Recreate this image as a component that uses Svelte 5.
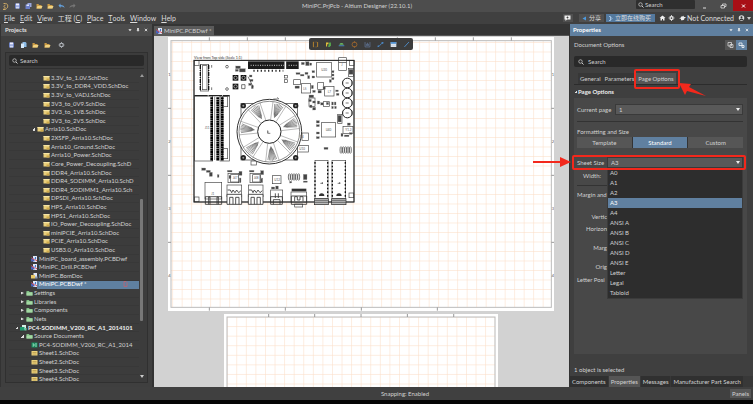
<script>
  const menus = ['File', 'Edit', 'View', '工程 (C)', 'Place', 'Tools', 'Window', 'Help'];

  const deep = (name) => ({ name, level: 4, icon: 'sch' });
  const tree = [
    ...['3.3V_to_1.0V.SchDoc', '3.3V_to_DDR4_VDD.SchDoc', '3.3V_to_VADJ.SchDoc', '3V3_to_0V9.SchDoc', '3V3_to_1V8.SchDoc', '3V3_to_2V5.SchDoc'].map(deep),
    { name: 'Arria10.SchDoc', level: 3, icon: 'sch', arrow: 'open' },
    ...['2XSFP_Arria10.SchDoc', 'Arria10_Ground.SchDoc', 'Arria10_Power.SchDoc', 'Core_Power_Decoupling.SchD', 'DDR4_Arria10.SchDoc', 'DDR4_SODIMM_Arria10.SchD', 'DDR4_SODIMM1_Arria10.Sch', 'DPSDI_Arria10.SchDoc', 'HPS_Arria10.SchDoc', 'HPS1_Arria10.SchDoc', 'IO_Power_Decoupling.SchDoc', 'miniPCIE_Arria10.SchDoc', 'PCIE_Arria10.SchDoc', 'USB3.0_Arria10.SchDoc'].map(deep),
    { name: 'MiniPC_board_assembly.PCBDwf', level: 2, icon: 'dwf' },
    { name: 'MiniPC_Drill.PCBDwf', level: 2, icon: 'dwf' },
    { name: 'MiniPC.BomDoc', level: 2, icon: 'bom' },
    { name: 'MiniPC.PCBDwf *', level: 2, icon: 'dwf', active: true },
    { name: 'Settings', level: 1, icon: 'folder', arrow: 'shut' },
    { name: 'Libraries', level: 1, icon: 'folder', arrow: 'shut' },
    { name: 'Components', level: 1, icon: 'folder', arrow: 'shut' },
    { name: 'Nets', level: 1, icon: 'folder', arrow: 'shut' },
    { name: 'PC4-SODIMM_V200_RC_A1_2014101', level: 0, icon: 'proj', arrow: 'open', bold: true },
    { name: 'Source Documents', level: 1, icon: 'folder', arrow: 'open' },
    { name: 'PC4-SODIMM_V200_RC_A1_2014', level: 2, icon: 'pcb' },
    ...['Sheet1.SchDoc', 'Sheet2.SchDoc', 'Sheet3.SchDoc', 'Sheet4.SchDoc'].map((name) => ({ name, level: 2, icon: 'sheet' }))
  ];

  const sizes = ['A0', 'A1', 'A2', 'A3', 'A4', 'ANSI A', 'ANSI B', 'ANSI C', 'ANSI D', 'ANSI E', 'Letter', 'Legal', 'Tabloid'];
  let size = $state('A3');
  let section = $state('Page Options');
  let format = $state('Standard');

  const polar = (r, deg) => [328 + r * Math.cos((deg * Math.PI) / 180), 305 + r * Math.sin((deg * Math.PI) / 180)].map((v) => v.toFixed(1)).join(' ');
  const angles = [33, 84, 136, 187, 239, 290, 341];
  const hatch = angles.map((a) => [-3, -2, -1, 0, 1, 2, 3].map((k) => `M${polar(44 + Math.abs(k) * 3, a + k * 1.5)}L${polar(88 - Math.abs(k), a + k * 3)}`).join('')).join('');
  const blades = angles.map((a) => `M${polar(36, a - 14)}L${polar(91, a - 13)}M${polar(36, a + 14)}L${polar(91, a + 13)}`).join('');

  const seq = (n) => Array.from({ length: n }, (_, i) => i);
  // small parts: x, y, width, height
  const solid = [
    [227, 108, 14, 8], [238, 116, 18, 10], [226, 118, 9, 6], [268, 135, 8, 6], [270, 148, 9, 6], [266, 160, 8, 6], [274, 166, 6, 10],
    [424, 97, 9, 7], [437, 95, 10, 12], [449, 99, 6, 7], [408, 128, 12, 5], [421, 133, 11, 5], [435, 127, 9, 6], [443, 137, 6, 9],
    [456, 122, 8, 6], [456, 138, 8, 6], [515, 122, 7, 6], [515, 132, 7, 6], [515, 143, 7, 6], [508, 149, 6, 8], [405, 168, 13, 7],
    [454, 166, 6, 10], [458, 181, 8, 6], [474, 181, 10, 8], [489, 170, 7, 8], [527, 180, 8, 5], [529, 190, 8, 6], [447, 195, 14, 8],
    [446, 208, 8, 7], [458, 213, 8, 6], [449, 225, 7, 8], [458, 232, 9, 8], [472, 213, 7, 9], [482, 218, 8, 7], [499, 217, 7, 7],
    [515, 216, 5, 9], [523, 216, 5, 9], [515, 229, 5, 7], [524, 229, 5, 7], [469, 272, 9, 7], [469, 284, 9, 6], [469, 306, 9, 6], [469, 320, 9, 6],
    [534, 256, 10, 20], [562, 279, 9, 7], [543, 310, 6, 9], [553, 315, 14, 5], [568, 308, 8, 5], [492, 352, 12, 6], [567, 118, 12, 15],
    [125, 414, 12, 7], [139, 421, 12, 6], [148, 427, 9, 12], [172, 434, 5, 8], [207, 436, 6, 10], [237, 424, 9, 12], [302, 422, 9, 12],
    [202, 421, 14, 5], [268, 421, 14, 5], [334, 471, 10, 6], [347, 468, 8, 9], [430, 433, 11, 16], [430, 453, 12, 4], [389, 454, 6, 5], [238, 444, 5, 14], [303, 444, 5, 14]
  ];
  const outline = [
    [102, 91, 480, 425], [103, 92, 14, 14], [103, 501, 14, 14], [567, 489, 14, 14], [568, 92, 14, 14], [121, 103, 25, 80], [127, 107, 14, 72],
    [104, 198, 54, 195], [180, 198, 28, 195], [187, 200, 16, 30], [187, 356, 16, 30], [470, 97, 44, 44], [536, 83, 23, 14], [536, 97, 23, 24],
    [424, 161, 28, 28], [401, 149, 20, 15], [473, 158, 18, 20], [494, 169, 28, 29], [447, 204, 18, 25], [484, 278, 43, 43], [549, 289, 30, 21],
    [565, 115, 15, 24], [426, 309, 19, 22], [413, 346, 32, 20], [135, 457, 50, 50], [204, 430, 32, 28], [212, 434, 24, 22], [270, 430, 32, 28], [278, 434, 22, 22],
    [201, 465, 44, 35], [265, 465, 44, 35], [337, 437, 26, 24], [332, 480, 36, 36], [393, 486, 47, 30], [404, 522, 24, 9],
    [465, 391, 39, 116], [516, 391, 41, 116], [273, 393, 16, 12], [373, 136, 9, 8], [373, 149, 9, 8], [490, 215, 18, 14], [533, 253, 13, 27]
  ];
  const bolts = [[250, 227], [407, 227], [250, 383], [407, 383]];
</script>

{#snippet glass()}
  <svg class="i6" viewBox="0 0 12 12" aria-hidden="true"><circle cx="5" cy="5" r="3.5" fill="none" stroke="#ccc" stroke-width="1.5" /><path d="M8 8l3 3" stroke="#ccc" stroke-width="2" /></svg>
{/snippet}

{#snippet icon(kind)}
  <svg class="i7" viewBox="0 0 14 12" aria-hidden="true">
    {#if kind === 'sch'}
      <path d="M1 2h12v9H1z" fill="#e9cf7c" /><path d="M1 2h12v2H1z" fill="#f6e5a6" /><path d="M7 7h6v4H7z" fill="#cfa94a" />
    {:else if kind === 'sheet'}
      <path d="M1 2h12v9H1z" fill="#ecd27c" /><path d="M3 5h8M3 8h8" stroke="#9b7b32" />
    {:else if kind === 'folder'}
      <path d="M1 2h5l1 2h6v7H1z" fill="#7fbf84" /><path d="M1 5h12v6H1z" fill="#a3d7a2" />
    {:else if kind === 'dwf'}
      <path d="M4 0h8v12H4z" fill="#dfe6f5" /><path d="M0 5h7v6H0z" fill="#4b62b8" /><path d="M1 3l5 5M8 7l4 3" stroke="#d9474e" stroke-width="2" /><path d="M9 2v4" stroke="#3e76d0" stroke-width="2" />
    {:else if kind === 'bom'}
      <path d="M5 0h7v9H5z" fill="#dfe6f5" /><path d="M0 4h8v7H0z" fill="#e7c868" /><path d="M8 7h5v4H8z" fill="#8e9fbd" />
    {:else if kind === 'proj'}
      <path d="M4 0h8v9H4z" fill="#d6efe5" /><path d="M0 4h9v7H0z" fill="#1f9a6d" /><path d="M9 6h4v5H9z" fill="#6ccba6" />
    {:else if kind === 'save'}
      <path d="M2 1h10v10H2z" fill="#7285c6" /><path d="M4 1h6v4H4z" fill="#eef" /><path d="M4 7h6v4H4z" fill="#cfd8f2" />
    {:else if kind === 'saveall'}
      <path d="M5 0h8v8H5z" fill="#9aa7dc" /><path d="M1 3h9v9H1z" fill="#6c7fc8" /><path d="M3 3h5v3H3z" fill="#dde3fa" />
    {:else if kind === 'docs'}
      <path d="M5 0h6l2 2v8H5z" fill="#8dbce6" /><path d="M2 3h6v9H2z" fill="#d6e9fa" />
    {:else if kind === 'open'}
      <path d="M1 2h4l1 2h5v7H1z" fill="#c99a45" /><path d="M3 6h10l-2 5H1z" fill="#f1d382" />
    {:else if kind === 'undo'}
      <path d="M1 5l4-4v3c5 0 8 2 8 6-2-3-4-3-8-3v3z" fill="#64a2df" />
    {:else if kind === 'redo'}
      <path d="M13 5L9 1v3c-5 0-8 2-8 6 2-3 4-3 8-3v3z" fill="#777" />
    {:else if kind === 'gear'}
      <circle cx="7" cy="6" r="3.5" fill="none" stroke="#b7bcc2" stroke-width="2.2" /><path d="M7 0v2M7 10v2M1 6h2M11 6h2M3 2l1 1M10 9l1 1M11 2l-1 1M3 10l1-1" stroke="#b7bcc2" stroke-width="1.5" />
    {:else}
      <path d="M1 1h12v10H1z" fill="#148a5b" /><path d="M3 4h3v4H3M8 4h4M8 8h4" fill="none" stroke="#bff0d8" stroke-width="1.5" />
    {/if}
  </svg>
{/snippet}

{#snippet pins()}
  <span class="pins">
    <svg viewBox="0 0 10 10"><path d="M1 3h8L5 8z" fill="#eee" /></svg>
    <svg viewBox="0 0 10 10"><path d="M3 0h4v5h1v2H2V5h1zM4.500 7h1v3h-1z" fill="#eee" /></svg>
    <svg viewBox="0 0 10 10"><path d="M2 2l6 6M8 2l-6 6" stroke="#eee" stroke-width="2" /></svg>
  </span>
{/snippet}

<div class="app">
  <header class="title">
    <div class="quick">
      <svg class="logo" viewBox="0 0 14 18" aria-hidden="true"><path d="M3 3h4c6 0 6 10 0 11H3M7 6c-4 0-4 6 0 5M2 15h5" fill="none" stroke="#c9a765" stroke-width="2" /></svg>
      {#each ['save', 'saveall', 'open', 'open', 'undo', 'redo'] as k}<button aria-label={k}>{@render icon(k)}</button>{/each}
    </div>
    <h1>MiniPC.PrjPcb - Altium Designer (22.10.1)</h1>
    <label class="find">{@render glass()}<input aria-label="Search" placeholder="Search" /></label>
    <div class="win">
      <button aria-label="Minimize"><svg class="i7" viewBox="0 0 14 12"><path d="M4 10h6" stroke="#ddd" stroke-width="2" /></svg></button>
      <button aria-label="Restore"><svg class="i7" viewBox="0 0 14 12"><path d="M2 5h7v5H2zM5 5V2h7v5H9" fill="none" stroke="#ddd" stroke-width="1.6" /></svg></button>
      <button class="close" aria-label="Close"><svg class="i7" viewBox="0 0 14 12"><path d="M4 3l6 6M10 3l-6 6" stroke="#fff" stroke-width="2" /></svg></button>
    </div>
  </header>

  <nav class="menu">
    {#each menus as m}<button>{#if m.includes('(')}{m.slice(0, -2)}<u>C</u>){:else}<u>{m[0]}</u>{m.slice(1)}{/if}</button>{/each}
    <div class="account">
      <button class="note" aria-label="Comments"><svg class="i7" viewBox="0 0 14 12"><path d="M1 1h12v8H6l-3 3V9H1z" fill="#eee" /><path d="M7 3v4M5 5h4" stroke="#333" stroke-width="1.5" /></svg></button>
      <button class="share"><svg class="i5" viewBox="0 0 10 10"><path d="M1 5l7-4v8z" fill="#4d9ae0" /></svg>分享</button>
      <button class="buy"><svg class="i5" viewBox="0 0 10 10"><path d="M2 1h3v8H2M5 2l3 3-3 3" fill="none" stroke="#b9d8f5" stroke-width="1.5" /></svg>立即在线购买</button>
      <svg class="i7" viewBox="0 0 14 12"><path d="M7 1l6 5h-2v5H8V8H6v3H3V6H1z" fill="#eee" /></svg>
      <svg class="i7" viewBox="0 0 14 12"><circle cx="7" cy="6" r="3" fill="none" stroke="#eee" stroke-width="2.500" /><path d="M7 0v2M7 10v2M1 6h2M11 6h2M3 2l1 1M10 9l1 1M11 2l-1 1M3 10l1-1" stroke="#eee" stroke-width="1.500" /></svg>
      <span class="link"><svg class="i7" viewBox="0 0 14 12"><path d="M1 7h2c0-4 3-5 5-4l1-2 1 3h3v2h-2c0 4-3 5-5 4l-2 1 0-3H1z" fill="#eee" /></svg>Not Connected</span>
      <svg class="i7" viewBox="0 0 14 12"><circle cx="7" cy="6" r="5.500" fill="#ddd" /><circle cx="7" cy="4.500" r="2" fill="#333" /><path d="M3 10c1-4 7-4 8 0" fill="#333" /></svg>
      <i class="caret"></i>
    </div>
  </nav>

  <main>
    <aside class="projects">
      <h2 class="bar">Projects {@render pins()}</h2>
      <div class="tools">
        {#each ['save', 'docs', 'open', 'open'] as k}<button aria-label={k}>{@render icon(k)}</button>{/each}
        <button class="set" aria-label="Settings">{@render icon('gear')}</button>
      </div>
      <div class="box">
        <label class="search">{@render glass()}<input aria-label="Search projects" placeholder="Search" /></label>
        <div class="scroll">
          <ul class="tree">
            {#each tree as t}
              <li class="l{t.level}" class:active={t.active} class:bold={t.bold}>
                <i class="tri {t.arrow ?? ''}"></i>{@render icon(t.icon)}<span>{t.name}</span>
                {#if t.active}<svg class="mark" viewBox="0 0 10 12"><path d="M2 1h4l2 2v8H2z" fill="none" stroke="#c7606e" stroke-width="1.500" /></svg>{/if}
              </li>
            {/each}
          </ul>
          <div class="track"><i class="caret up"></i><b></b><i class="caret"></i></div>
        </div>
      </div>
    </aside>

    <section class="editor">
      <div class="tabs"><button class="doc">{@render icon('dwf')}MiniPC.PCBDwf *</button></div>
      <div class="canvas">
        <svg class="sheet" viewBox="24 21 1158 822">
          <defs><pattern id="grid" x="8" y="36" width="28.500" height="28.500" patternUnits="userSpaceOnUse"><path d="M1 0v28.500M0 1h28.500" stroke="#fcdfca" stroke-width="2" fill="none" /></pattern></defs>
          <rect x="24" y="21" width="1158" height="822" fill="#fff" />
          <rect x="33" y="32" width="1141" height="800" fill="url(#grid)" stroke="#bbb" stroke-width="3" />
          <path d="M148 22v10M262 22v10M376 22v10M712 22v10M826 22v10M940 22v10M1054 22v10M24 235h9M24 436h9M24 637h9M1174 235h8M1174 436h8M1174 637h8M148 832v10M376 832v10M604 832v10M832 832v10" stroke="#999" stroke-width="3" />
          <g class="ref">{#each [1, 2, 3, 4] as n}<text x="25" y={n * 201 - 62}>{n}</text><text x="1175" y={n * 201 - 62}>{n}</text>{/each}</g>
          <text class="view" x="102" y="88">View from Top side (Scale 1:1)</text>
          <rect x="102" y="91" width="480" height="425" fill="#fff" />
          <g fill="#fff" stroke="#444" stroke-width="2">{#each outline as [x, y, width, height]}<rect {x} {y} {width} {height} />{/each}</g>
          <rect x="102" y="91" width="480" height="425" fill="none" stroke="#222" stroke-width="3" />
          <path d="M103 197h106" stroke="#222" stroke-width="4" stroke-dasharray="40 3" />
          <path d="M155 202v190M173 202v190M187 202v190" stroke="#000" stroke-width="8" stroke-dasharray="6 1" />
          <path d="M164 200v190M180 200v190" stroke="#555" stroke-width="2" />
          <path d="M121 105v76M146 105v76" stroke="#111" stroke-width="4" stroke-dasharray="12 3 3 3" />
          <rect x="264" y="94" width="152" height="23" fill="#1c1c1c" />
          <path d="M272 106h100M386 106h26" stroke="#aaa" stroke-width="4" stroke-dasharray="3 4" />
          <path d="M376 94v23" stroke="#fff" stroke-width="5" />
          <path d="M280 122h90" stroke="#333" stroke-width="6" stroke-dasharray="4 7" />
          <g fill="#444" stroke="#999" stroke-width="1">{#each solid as [x, y, width, height]}<rect {x} {y} {width} {height} />{/each}</g>
          {#each [[218, 135], [242, 135], [218, 161]] as [x, y]}<rect {x} {y} width="17" height="17" fill="#111" /><circle cx={x + 8.5} cy={y + 8.5} r="5" fill="#111" stroke="#ddd" stroke-width="2" />{/each}
          <g fill="none" stroke="#333" stroke-width="2"><circle cx="201" cy="110" r="4" /><circle cx="201" cy="177" r="4" /><path d="M245 164h10v12h-10zM155 105v8M155 172v8M264 140l15 30" /></g>
          {#each seq(4) as n}<circle cx="562" cy={159 + n * 30} r="14.500" fill="#fff" stroke="#222" stroke-width="3" /><path d="M548 {154 + n * 30}v10M576 {152 + n * 30}v14M557 {159 + n * 30}h9" stroke="#333" stroke-width="2" />{/each}
          <rect x="243" y="220" width="170" height="170" fill="#fff" stroke="#333" stroke-width="2" />
          {#each bolts as [cx, cy]}<circle {cx} {cy} r="8" fill="#222" /><circle {cx} {cy} r="3" fill="#999" />{/each}
          <circle cx="328" cy="305" r="97" fill="#fff" stroke="#333" stroke-width="3" />
          <circle cx="328" cy="305" r="91" fill="none" stroke="#555" stroke-width="2" />
          <path d={hatch} stroke="#333" stroke-width="1.500" />
          <path d={blades} fill="none" stroke="#777" stroke-width="1.500" />
          <circle cx="328" cy="305" r="35" fill="#fff" stroke="#222" stroke-width="3" />
          <path d="M323 301v9h8M340 207h16l-4-5M322 306h4" fill="none" stroke="#444" stroke-width="2" />
          {#each [388, 543] as x, k}{#each seq(5) as n}<ellipse cx={x + n * 7} cy={k ? 360 : 441} rx="3" ry="10" fill="none" stroke="#333" stroke-width="2" />{/each}{/each}
          {#each [201, 265] as x}
            <path d="M{x} 493h44v30h-44zM{x + 8} 523v-21h10v21M{x + 26} 523v-21h10v21M{x + 2} 480h8l4 8 4-8 6 8 5-8 6 8 7-6" fill="#fff" stroke="#333" stroke-width="2.500" />
          {/each}
          <path d="M136 500h49v23h-49zM146 523v-22h4v22M171 523v-22h4v22M332 500h35v23h-35zM340 523v-14h20v14M346 490v14M355 490v14M394 498h46v25h-46zM404 514v-14h8v10h8v-10h9v14" fill="none" stroke="#333" stroke-width="2.500" />
          <path d="M395 484h44v-8h-44z" fill="#333" />
          {#each [[463, 42], [515, 43]] as [x, w]}
            <rect {x} y="506" width={w} height="18" fill="#bbb" stroke="#222" stroke-width="2" />
            <path d="M{x} 511h{w}M{x} 517h{w}" stroke="#444" stroke-width="2" />
            <path d="M{x + 2} 396v106M{x + w - 2} 396v106" stroke="#111" stroke-width="4" stroke-dasharray="5 6" />
            <path d="M{x + 14} 498a8 8 0 0 1 16 0z" fill="#333" /><path d="M{x + 18} 460h8M{x + 24} 456v6" stroke="#444" stroke-width="2" />
          {/each}
          <g class="part"><text x="484" y="124">U20</text><text x="430" y="180">L5</text><text x="503" y="188">L7</text><text x="497" y="303">U40</text><text x="556" y="304">Y1.2</text><text x="420" y="324">C4</text><text x="418" y="360">U10</text><text x="218" y="448">J47</text><text x="281" y="448">J48</text><text x="343" y="453">U12</text><text x="154" y="494">J1</text><text x="134" y="298">J11</text><text x="544" y="108">J</text></g>
        </svg>
        <svg class="sheet second" viewBox="0 0 816 600">
          <rect width="816" height="600" fill="#fff" /><rect x="9" y="9" width="798" height="600" fill="url(#grid)" stroke="#bbb" stroke-width="3" />
          <path d="M133 0v9M270 0v9M408 0v9M546 0v9M684 0v9" stroke="#999" stroke-width="3" />
        </svg>
        <div class="float">
          <button aria-label="View"><svg viewBox="0 0 20 20"><path d="M4 3v14M16 3v14" stroke="#c48a2b" stroke-width="2.500" /><path d="M4 3h12M4 17h12" stroke="#c48a2b" stroke-width="1.500" stroke-dasharray="2" /></svg></button>
          <button aria-label="Layers"><svg viewBox="0 0 20 20"><path d="M3 16V4h7v5H6v7z" fill="#e4c33c" /><path d="M9 17l3-13h5v9l-4 4z" fill="#56a94d" /></svg></button>
          <button aria-label="Section"><svg viewBox="0 0 20 20"><path d="M4 11c0-7 12-7 12 0z" fill="#68b35e" /><path d="M2 12h16v3H2z" fill="#4b82b5" /></svg></button>
          <button aria-label="Detail"><svg viewBox="0 0 20 20"><circle cx="10" cy="10" r="7" fill="none" stroke="#b9712a" stroke-width="2" /><path d="M10 1v4M10 15v4" stroke="#b9712a" stroke-width="2" /></svg></button>
          <button aria-label="Dimension"><svg viewBox="0 0 20 20"><path d="M3 3v14h14V3M7 8v6M10 5v9M13 8v6" fill="none" stroke="#63799e" stroke-width="2" /></svg></button>
          <button aria-label="Callout"><svg viewBox="0 0 20 20"><path d="M2 16l5-2 5-6 6-3" fill="none" stroke="#4b83bd" stroke-width="2.500" /><path d="M13 3h5v5h-5zM2 13h4v4H2z" fill="#4b83bd" /></svg></button>
          <button aria-label="Table"><svg viewBox="0 0 20 20"><path d="M2 3h16v14H2z" fill="#e7edf5" /><path d="M2 3h16v5H2z" fill="#4d8fd0" /><path d="M2 12h16" stroke="#8395ab" /></svg></button>
          <button aria-label="Line"><svg viewBox="0 0 20 20"><path d="M4 17L17 3" stroke="#4f92d4" stroke-width="2.500" /></svg></button>
        </div>
      </div>
    </section>

    <aside class="props">
      <h2 class="bar blue">Properties {@render pins()}</h2>
      <div class="inner">
        <div class="scope">Document Options
          <span><button aria-label="Select"><svg class="i7" viewBox="0 0 14 12"><path d="M2 1h7v7H2zM6 5h6v6H6z" fill="none" stroke="#ddd" stroke-width="1.500" /></svg></button><button class="on" aria-label="Filter"><svg class="i7" viewBox="0 0 14 12"><path d="M2 2h6v5H2zM8 7h4v4H8z" fill="none" stroke="#fff" stroke-width="1.500" /></svg></button></span>
        </div>
        <label class="search">{@render glass()}<input aria-label="Search properties" placeholder="Search" /></label>
        <div class="sections">
          {#each ['General', 'Parameters', 'Page Options'] as s}<button class:on={section === s} onclick={() => (section = s)}>{s}</button>{/each}
          <div class="ring tabring"></div>
          <svg class="pointer short" viewBox="0 0 28 14"><path d="M0 0l12 1-2 3 17 9L8 8l-2 4z" fill="#f3281c" /></svg>
        </div>
        <h3><i class="tri open"></i>Page Options</h3>
        <div class="form">
          <div class="field"><label for="page">Current page</label><div class="pick"><select id="page"><option>1</option></select></div></div>
          <hr />
          <p>Formatting and Size</p>
          <div class="seg">{#each ['Template', 'Standard', 'Custom'] as f}<button class:on={format === f} onclick={() => (format = f)}>{f}</button>{/each}</div>
          <div class="field sheetsize">
            <label for="size">Sheet Size</label>
            <div class="pick"><select id="size" bind:value={size}>{#each sizes as s}<option>{s}</option>{/each}</select></div>
            <ul class="list" role="listbox" aria-label="Sheet Size">
              {#each sizes as s}<li role="option" aria-selected={size === s}>{s}</li>{/each}
            </ul>
            <div class="ring sizering"></div>
            <svg class="pointer long" viewBox="0 0 38 10"><path d="M0 4h27V0l11 5-11 5V6H0z" fill="#f3281c" /></svg>
          </div>
          <div class="covered">
            <span class="r">Width:</span>
            <hr />
            <span class="head">Margin and</span>
            <span class="r cut">Vertic</span>
            <span class="r cut">Horizon</span>
            <span class="r cut gap">Marg</span>
            <span class="r cut gap">Orig</span>
            <span class="cut">Letter Posi</span>
          </div>
        </div>
        <p class="count">1 object is selected</p>
      </div>
      <div class="foot">{#each ['Components', 'Properties', 'Messages', 'Manufacturer Part Search'] as f}<button class:on={f === 'Properties'}>{f}</button>{/each}</div>
    </aside>
  </main>

  <footer><span>Snapping: Enabled</span><button>Panels</button></footer>
</div>

<style>
  :global(body) { margin: 0; background: #050505; }
  .app { display: flex; flex-direction: column; height: 100vh; box-sizing: border-box; padding-bottom: 4px; background: #050505; color: #d2d2d2; font: 6px/8px Lato, 'Noto Sans CJK SC', sans-serif; overflow: hidden; }
  .app * { box-sizing: border-box; }
  button, input, select { font: inherit; color: inherit; border: 0; margin: 0; padding: 0; background: none; }
  button { display: flex; align-items: center; justify-content: center; white-space: nowrap; }
  input { min-width: 0; width: 100%; height: 8px; outline: 0; }
  input::placeholder { color: #cfcfcf; opacity: 1; }
  ul, p, h1, h2, h3 { margin: 0; padding: 0; list-style: none; font-size: inherit; }
  svg { flex: none; display: block; }
  .i5 { width: 5px; height: 5px; }
  .i6 { width: 6px; height: 6px; }
  .i7 { width: 7px; height: 6px; }
  .caret { border: 2px solid transparent; border-top: 3px solid #ccc; border-bottom: 0; width: 0; height: 0; }
  .caret.up { border-top: 0; border-bottom: 3px solid #999; }

  .title { display: flex; align-items: center; height: 12px; background: #4d4d4d; flex: none; }
  .quick { display: flex; align-items: center; gap: 4px; padding-left: 2px; width: 78px; }
  .logo { width: 7px; height: 9px; margin-right: 1px; }
  h1 { flex: 1; text-align: center; font-weight: 400; }
  .find { display: flex; align-items: center; gap: 1px; width: 59px; height: 9px; margin-bottom: 3px; padding-left: 2px; background: #2f2f2f; border-radius: 1px; }
  .win { display: flex; align-self: stretch; }
  .win button { width: 19px; height: 11px; }
  .win .close { width: 20px; background: #a80f16; }

  .menu { display: flex; align-items: center; height: 12px; padding: 0 2px 0 4px; gap: 5px; background: #404040; font-size: 7px; flex: none; color: #ddd; }
  .account { display: flex; align-items: center; margin-left: auto; gap: 2px; }
  .share, .buy { height: 8px; font-size: 6px; gap: 2px; padding: 0 3px; background: #505050; }
  .note { width: 10px; height: 8px; margin-right: 4px; background: #505050; }
  .buy { background: #54799e; margin-right: 2px; padding: 0 4px 0 2px; }
  .link { display: flex; align-items: center; gap: 1px; margin: 0 2px; }

  main { display: flex; flex: 1; min-height: 0; }
  .bar { display: flex; align-items: center; justify-content: space-between; height: 12px; padding: 0 4px; color: #e2e2e2; background: #4c4c4c; flex: none; }
  .bar.blue { background: #6080a0; padding: 0 4px 0 3px; color: #fff; }
  .pins { display: flex; gap: 4px; }
  .pins svg { width: 4px; height: 4px; }

  .projects { display: flex; flex-direction: column; width: 154px; flex: none; background: #3f3f3f; border-right: 2px solid #333; border-left: 1px solid #333; padding-bottom: 4px; }
  .tools { display: flex; align-items: center; gap: 5px; height: 16px; padding: 2px 0 0 7px; }
  .set { margin-left: 2px; }
  .box { display: flex; flex-direction: column; flex: 1; min-height: 0; margin: 0 4px; border: 1px solid #303030; background: #3c3c3c; }
  .search { display: flex; align-items: center; gap: 2px; height: 11px; padding: 0 3px; background: #292929; border-radius: 2px; flex: none; }
  .box .search { margin: 2px 3px; }
  .scroll { display: flex; flex: 1; min-height: 0; margin: 0 3px 1px; padding-top: 5px; border-top: 1px solid #303030; overflow: hidden; }
  .tree { flex: 1; min-width: 0; display: grid; grid-template-columns: minmax(0, 1fr); grid-auto-rows: 1fr; margin-bottom: -3px; }
  .tree li { display: flex; align-items: center; min-height: 0; position: relative; border-bottom: 1px solid #383838; }
  .tree span { white-space: nowrap; line-height: 8px; margin-left: 1px; }
  .tree .bold span { font-weight: 700; color: #eee; }
  .tree .active { background: linear-gradient(90deg, transparent 28px, #5f80a0 28px); color: #fff; border-color: transparent; }
  .mark { width: 5px; height: 6px; position: absolute; right: 11px; }
  .tri { width: 3px; height: 3px; margin-right: 2px; flex: none; }
  .tri.open { background: linear-gradient(135deg, transparent 50%, #ddd 50%); }
  .tri.shut { clip-path: polygon(0 0, 100% 50%, 0 100%); background: #ddd; }
  .l0 { padding-left: 6px; }
  .l1 { padding-left: 12px; }
  .l2 { padding-left: 17px; }
  .l3 { padding-left: 23px; }
  .l4 { padding-left: 29px; }
  .track { display: flex; flex-direction: column; align-items: center; width: 5px; flex: none; justify-content: space-between; padding-bottom: 3px; }
  .track b { width: 3px; height: 40%; margin-top: 68px; background: #777; border-radius: 1px; }

  .editor { flex: 1; min-width: 0; display: flex; flex-direction: column; background: #d2d2d2; }
  .tabs { height: 12px; padding-top: 2px; background: #343434; border-bottom: 1px solid #555; flex: none; }
  .doc { height: 10px; padding: 0 2px; gap: 1px; background: #5b5b5b; }
  .canvas { position: relative; flex: 1; min-height: 0; overflow: hidden; padding: 1px 15px 0 14px; }
  .sheet { width: 100%; height: auto; }
  .second { width: 71%; margin: 3px auto 0; }
  .ref text { font-size: 12px; fill: #555; }
  .view { font-size: 11px; fill: #333; }
  .part text { font-size: 9px; fill: #555; }
  .float { position: absolute; top: 2px; left: 155px; display: flex; align-items: center; justify-content: space-around; width: 104px; height: 12px; background: #3c3c3c; border-radius: 2px; }
  .float svg { width: 7px; height: 7px; }

  .props { position: relative; display: flex; flex-direction: column; width: 184px; flex: none; background: #3f3f3f; border-left: 1px solid #333; }
  .inner { flex: 1; display: flex; flex-direction: column; padding: 4px 6px 0 4px; }
  .scope { display: flex; align-items: center; justify-content: space-between; height: 10px; }
  .scope span { display: flex; }
  .scope button { width: 11px; height: 10px; background: #555; }
  .scope .on, .seg .on { background: #6080a0; color: #fff; }
  .inner .search { margin-top: 6px; padding-left: 4px; gap: 4px; }
  .sections { position: relative; display: flex; margin-top: 6px; padding-left: 4px; border-bottom: 1px solid #2c2c2c; }
  .sections button { height: 11px; padding: 0 2px; background: #373737; }
  .sections .on { background: #565656; }
  h3 { display: flex; align-items: center; height: 13px; color: #eee; }
  .inner h3 .tri { margin-right: 1px; }
  .form { flex: 1; margin-bottom: 12px; padding: 6px 4px 0 3px; background: #484848; }
  .field { display: flex; align-items: center; height: 11px; }
  .field label { width: 38px; flex: none; }
  .pick { position: relative; flex: 1; }
  .pick::after { content: ''; position: absolute; right: 3px; top: 4px; border: 2px solid transparent; border-top: 3px solid #eee; border-bottom: 0; }
  select { appearance: none; display: block; width: 100%; height: 11px; padding-left: 3px; background: #595959; border: 1px solid #3a3a3a; outline: 0; }
  hr { width: 100%; margin: 6px 0; border: 0; border-top: 1px solid #333; }
  .seg { display: flex; gap: 1px; margin-top: 1px; background: #333; }
  .seg button { flex: 1; height: 11px; background: #565656; }
  .sheetsize { position: relative; margin-top: 9px; }
  .sheetsize label { width: 30px; }
  .list { position: absolute; z-index: 1; left: 30px; right: 0; top: 11px; background: #2d2d2d; border: 1px solid #3b3b3b; border-top: 0; }
  .list li { height: 10px; line-height: 10px; padding-left: 2px; }
  .list li[aria-selected='true'] { background: #6080a0; color: #fff; }
  .ring { position: absolute; z-index: 2; border: 2px solid #f3281c; border-radius: 2px; pointer-events: none; }
  .tabring { left: 60px; top: -4px; width: 46px; height: 20px; }
  .sizering { left: -5px; right: -3px; top: -2px; bottom: -2px; }
  .pointer { position: absolute; z-index: 3; }
  .short { width: 28px; height: 14px; left: 105px; top: 10px; }
  .long { width: 38px; height: 10px; left: -44px; top: 0; }
  .covered { display: flex; flex-direction: column; width: 30px; padding-top: 4px; white-space: nowrap; }
  .covered hr { width: 165px; margin: 5px 0; }
  .r { align-self: flex-end; padding-right: 6px; }
  .head { margin-bottom: 14px; }
  .cut { padding: 0; margin-bottom: 4px; }
  .gap { margin: 7px 0; }
  .gap + .gap { margin: 4px 0 5px; }
  .count { margin-bottom: 2px; }
  .foot { display: flex; gap: 1px; height: 11px; background: #383838; flex: none; }
  .foot button { padding: 0 2px; background: #303030; }
  .foot .on { background: #555; }

  footer { position: relative; display: flex; align-items: center; justify-content: flex-end; height: 13px; padding-right: 2px; background: #404040; flex: none; }
  footer span { flex: 1; text-align: center; padding-left: 80px; }
  footer button { height: 9px; padding: 0 2px; background: #565656; }
</style>
